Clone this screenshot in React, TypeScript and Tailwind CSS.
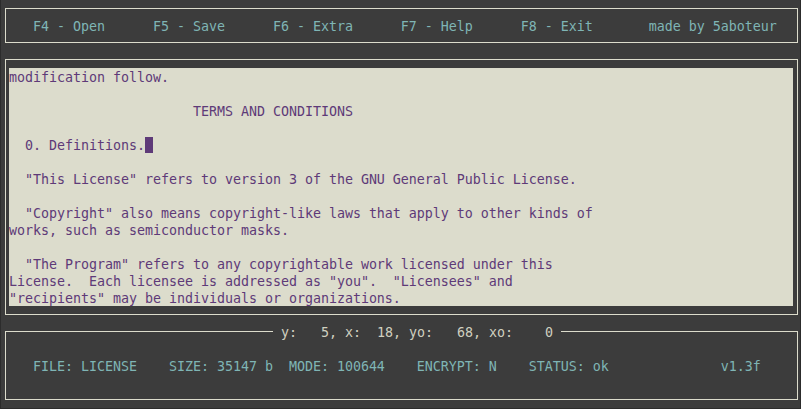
import React from 'react';

// builds a terminal line (cols 1..98) from [col, text] pieces
function line(parts: [number, string][]): string {
  let s = '';
  for (const [col, text] of parts) {
    const idx = col - 1;
    if (s.length < idx) s += ' '.repeat(idx - s.length);
    s += text;
  }
  return s;
}

const headerLine = line([
  [4, 'F4 - Open'],
  [19, 'F5 - Save'],
  [34, 'F6 - Extra'],
  [50, 'F7 - Help'],
  [65, 'F8 - Exit'],
  [81, 'made by 5aboteur'],
]);

const statusLine = line([
  [4, 'FILE: LICENSE'],
  [21, 'SIZE: 35147 b'],
  [36, 'MODE: 100644'],
  [52, 'ENCRYPT: N'],
  [66, 'STATUS: ok'],
  [90, 'v1.3f'],
]);

const editorLines: string[] = [
  'modification follow.',
  '',
  '                       TERMS AND CONDITIONS',
  '',
  '  0. Definitions.',
  '',
  '  "This License" refers to version 3 of the GNU General Public License.',
  '',
  '  "Copyright" also means copyright-like laws that apply to other kinds of',
  'works, such as semiconductor masks.',
  '',
  '  "The Program" refers to any copyrightable work licensed under this',
  'License.  Each licensee is addressed as "you".  "Licensees" and',
  '"recipients" may be individuals or organizations.',
];

const CURSOR_ROW = 4;

export default function App() {
  return (
    <div className="flex h-[409px] w-[801px] flex-col border-b border-l border-r border-[#2c2c2c] bg-[#3c3c3c] pl-[4px] pr-[2px] font-['DejaVu_Sans_Mono',monospace] text-[13.33px] leading-[19px] tracking-[-0.027px]">
      {/* function keys */}
      <div className="mt-[8px] h-[35px] border border-[#dcdccc] pl-[3px] pt-[8px]">
        <div className="h-[17px] whitespace-pre text-[#7fb5b5]">{headerLine}</div>
      </div>

      {/* editor */}
      <div className="mt-[16px] border border-[#dcdccc] pb-[8px] pl-[3px] pr-[4px] pt-[8px]">
        <div className="flex flex-col bg-[#dcdccc] text-[#5e3a78]">
          {editorLines.map((text, i) => (
            <div key={i} className="h-[17px] whitespace-pre">
              {text}
              {i === CURSOR_ROW && (
                <span className="mt-[1px] inline-block h-[16px] w-[8px] bg-[#5e3a78] align-top" />
              )}
            </div>
          ))}
        </div>
      </div>

      {/* status */}
      <div className="relative mt-[16px] border border-[#dcdccc] pb-[25px] pl-[3px] pt-[25px]">
        <span className="absolute left-[267px] top-[-9px] h-[17px] whitespace-pre bg-[#3c3c3c] text-[#d0d0c0]">
          {' y:   5, x:  18, yo:   68, xo:    0 '}
        </span>
        <div className="h-[17px] whitespace-pre text-[#7fb5b5]">{statusLine}</div>
      </div>
    </div>
  );
}
